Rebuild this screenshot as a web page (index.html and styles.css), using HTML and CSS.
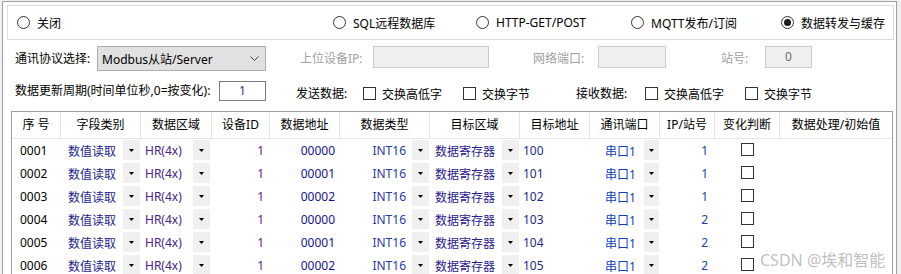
FILE: index.html
```html
<!DOCTYPE html>
<html>

<head>
    <meta charset="utf-8" />
    <title>数据转发与缓存</title>
    <link rel="stylesheet" href="styles.css">
</head>

<body>
    <div class="window">
        <div class="modes">
            <label class="mode w1"><span class="radio"></span>关闭</label>
            <label class="mode w2"><span class="radio"></span>SQL远程数据库</label>
            <label class="mode w3"><span class="radio"></span>HTTP-GET/POST</label>
            <label class="mode w4"><span class="radio"></span>MQTT发布/订阅</label>
            <label class="mode"><span class="radio on"></span>数据转发与缓存</label>
        </div>

        <div class="row proto">
            <span class="lbl l-proto">通讯协议选择:</span>
            <div class="select">
                <span>Modbus从站/Server</span>
                <svg width="9" height="6" viewBox="0 0 9 6"><polyline points="0.5,0.5 4.5,4.5 8.5,0.5" fill="none" stroke="#444" stroke-width="1" /></svg>
            </div>
            <span class="lbl off l-ip">上位设备IP:</span>
            <div class="box off b-ip"></div>
            <span class="lbl off l-port">网络端口:</span>
            <div class="box off b-port"></div>
            <span class="lbl off l-st">站号:</span>
            <div class="box off b-st">0</div>
        </div>

        <div class="row period">
            <span class="lbl l-per">数据更新周期(时间单位秒,0=按变化):</span>
            <div class="box b-per">1</div>
            <span class="lbl2 l-send">发送数据:</span>
            <label class="chk c-w1"><span class="cb"></span>交换高低字</label>
            <label class="chk c-w2"><span class="cb"></span>交换字节</label>
            <span class="lbl2 l-recv">接收数据:</span>
            <label class="chk c-w1"><span class="cb"></span>交换高低字</label>
            <label class="chk"><span class="cb"></span>交换字节</label>
        </div>

        <div class="grid" id="grid">
            <div class="ghead">
                <div>序 号</div>
                <div>字段类别</div>
                <div>数据区域</div>
                <div>设备ID</div>
                <div>数据地址</div>
                <div>数据类型</div>
                <div>目标区域</div>
                <div>目标地址</div>
                <div>通讯端口</div>
                <div>IP/站号</div>
                <div>变化判断</div>
                <div class="last">数据处理/初始值</div>
            </div>
        </div>
    </div>

    <div class="mark">CSDN @埃和智能</div>

    <script>
        var rows = [
            ["0001", "00000", "100", "1"],
            ["0002", "00001", "101", "1"],
            ["0003", "00002", "102", "1"],
            ["0004", "00000", "103", "2"],
            ["0005", "00001", "104", "2"],
            ["0006", "00002", "105", "2"]
        ];
        var dd = '<span class="dd"><svg width="5" height="3" viewBox="0 0 5 3"><polygon points="0,0 5,0 2.5,3" fill="#000"/></svg></span>';
        var str = "";
        for (var i = 0; i < rows.length; i++) {
            str += `<div class="grow">
                <div class="c1">${rows[i][0]}</div>
                <div class="c2"><span class="t">数值读取</span>${dd}</div>
                <div class="c3"><span class="t">HR(4x)</span>${dd}</div>
                <div class="c4">1</div>
                <div class="c5">${rows[i][1]}</div>
                <div class="c6"><span class="t">INT16</span>${dd}</div>
                <div class="c7"><span class="t">数据寄存器</span>${dd}</div>
                <div class="c8">${rows[i][2]}</div>
                <div class="c9"><span class="t">串口1</span>${dd}</div>
                <div class="c10">${rows[i][3]}</div>
                <div class="c11"><span class="cb"></span></div>
                <div class="c12"></div>
            </div>`;
        }
        document.getElementById("grid").insertAdjacentHTML("beforeend", str);
    </script>
</body>

</html>
```

FILE: styles.css
```css
body {
    margin: 0;
    background-color: #f0f0f0;
    font-family: "Noto Sans", "Noto Sans CJK SC", sans-serif;
    font-size: 12px;
    color: #000;
    overflow: hidden;
}

.window {
    margin: 1px 0 0 2px;
    width: 893px;
    height: 273px;
    overflow: hidden;
    background-color: #fff;
    border: solid 1px #a0a0a0;
    border-bottom: none;
}

/* mode radios */
.modes {
    margin: 3px 0 0 4px;
    width: 876px;
    height: 33px;
    padding-left: 9px;
    border: solid 1px #dcdcdc;
    display: flex;
    align-items: center;
}

.mode {
    display: flex;
    align-items: center;
    white-space: nowrap;
}

.w1 { width: 316px; }
.w2 { width: 143px; }
.w3 { width: 155px; }
.w4 { width: 150px; }

.radio {
    width: 13px;
    height: 13px;
    box-sizing: border-box;
    border: solid 1px #333;
    border-radius: 50%;
    margin-right: 7px;
    display: flex;
    align-items: center;
    justify-content: center;
}

.radio.on::after {
    content: "";
    width: 7px;
    height: 7px;
    border-radius: 50%;
    background-color: #1a1a1a;
}

/* settings rows */
.row {
    display: flex;
    padding-left: 12px;
    white-space: nowrap;
}

.proto {
    margin-top: 6px;
    align-items: flex-start;
}

.lbl {
    line-height: 25px;
}

.off {
    color: #a0a0a0;
}

.l-proto { width: 82px; }
.l-ip { width: 73px; margin-left: 34px; }
.l-port { width: 65px; margin-left: 44px; }
.l-st { width: 44px; margin-left: 55px; }

.select {
    width: 169px;
    height: 25px;
    box-sizing: border-box;
    background-color: #e1e1e1;
    border: solid 1px #adadad;
    padding: 0 6px 0 4px;
    display: flex;
    align-items: center;
    justify-content: space-between;
}

.box {
    box-sizing: border-box;
    height: 22px;
    border: solid 1px #cccccc;
    background-color: #f0f0f0;
    text-align: center;
    line-height: 20px;
}

.b-ip { width: 116px; }
.b-port { width: 68px; }
.b-st { width: 47px; color: #6d6d6d; }

.period {
    margin-top: 10px;
    height: 20px;
    align-items: flex-start;
}

.l-per {
    width: 204px;
    line-height: 20px;
}

.b-per {
    width: 47px;
    height: 20px;
    line-height: 18px;
    border-color: #7a7a7a;
    background-color: #fff;
    color: #3a2c8c;
}

.lbl2 {
    line-height: 13px;
    margin-top: 6px;
}

.l-send { width: 67px; margin-left: 30px; }
.l-recv { width: 69px; }

.chk {
    display: flex;
    align-items: center;
    height: 13px;
    margin-top: 6px;
}

.c-w1 { width: 100px; }
.c-w2 { width: 113px; }

.cb {
    width: 13px;
    height: 13px;
    box-sizing: border-box;
    border: solid 1px #333;
    background-color: #fff;
    margin-right: 6px;
}

/* data grid */
.grid {
    margin: 10px 0 0 8px;
    width: 880px;
    border: solid 1px #a0a0a0;
    border-bottom: none;
}

.ghead,
.grow {
    display: grid;
    grid-template-columns: 49px 80px 71px 58px 70px 90px 90px 70px 70px 55px 65px 112px;
}

.ghead {
    height: 26px;
    border-bottom: solid 1px #e5e5e5;
}

.ghead div {
    box-sizing: border-box;
    border-right: solid 1px #e5e5e5;
    line-height: 26px;
    text-align: center;
    white-space: nowrap;
}

.ghead .last {
    border-right: none;
}

.grow {
    height: 23px;
}

.grow > div {
    display: flex;
    align-items: center;
    white-space: nowrap;
}

.dd {
    width: 17px;
    height: 20px;
    align-self: flex-start;
    margin-top: 1px;
    background-color: #f0f0f0;
    display: flex;
    align-items: center;
    justify-content: center;
}

.c1 { padding-left: 8px; }
.c2 { padding-left: 7px; color: #1e1e8c; }
.c3 { padding-left: 4px; color: #4a208c; }
.c4 { justify-content: flex-end; padding-right: 6px; color: #602880; }
.c5 { justify-content: flex-end; padding-right: 5px; color: #14148c; }
.c6 { justify-content: flex-end; color: #2a3aa8; }
.c7 { padding-left: 5px; color: #28208e; }
.c8 { padding-left: 3px; color: #1c2a8c; }
.c9 { padding-left: 15px; color: #1040c0; }
.c10 { justify-content: flex-end; padding-right: 7px; color: #2040b0; }
.c11 { justify-content: center; }

.c2 .t, .c3 .t, .c7 .t { flex: 1; }
.c6 .t { margin-right: 6px; }
.c9 .t { margin-right: 8px; }
.c2 .dd, .c6 .dd, .c7 .dd { margin-right: 1px; }
.c3 .dd { margin-right: 2px; }
.c9 .dd { margin-right: 1px; }

.c11 .cb {
    margin: 4px 0 0 0;
    align-self: flex-start;
}

.mark {
    position: absolute;
    left: 760px;
    top: 247px;
    font-size: 16px;
    color: rgba(170, 170, 170, 0.75);
    white-space: nowrap;
}
```
